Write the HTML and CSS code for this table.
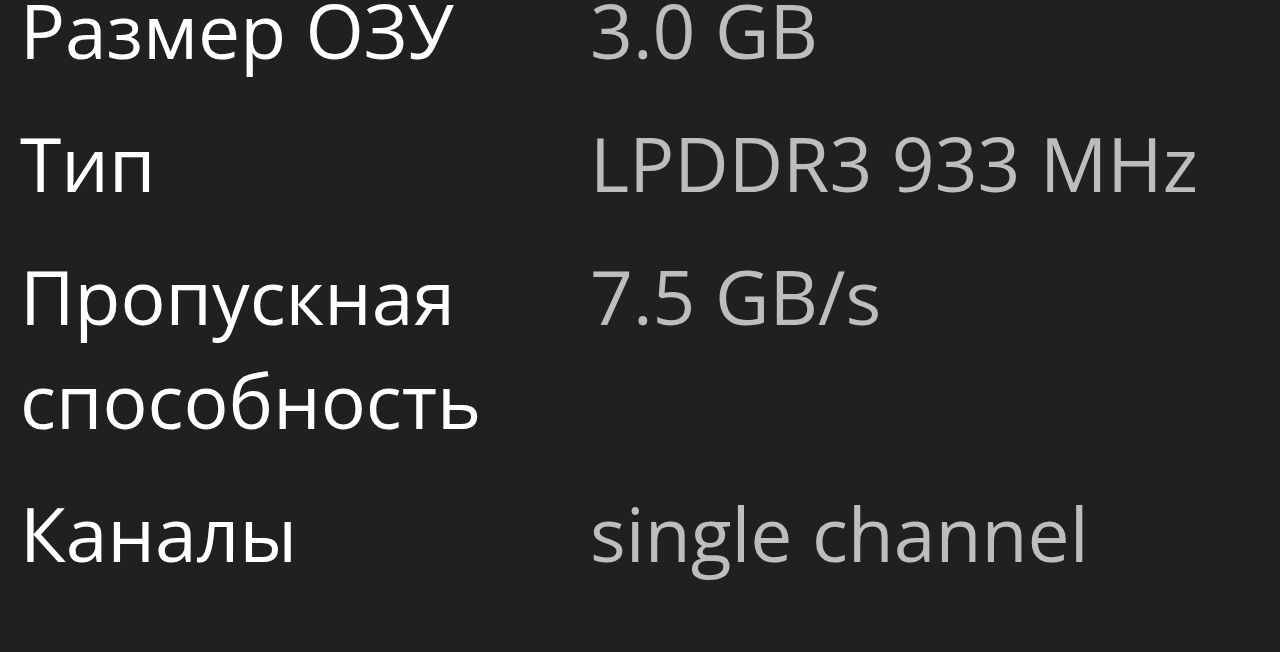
FILE: index.html
```html
<!DOCTYPE html>
<html lang="ru">
<head>
<meta charset="utf-8">
<link rel="stylesheet" href="styles.css">
</head>
<body>
<div class="specs">
  <div class="label">Размер ОЗУ</div><div class="value">3.0 GB</div>
  <div class="label">Тип</div><div class="value">LPDDR3 933 MHz</div>
  <div class="label">Пропускная способность</div><div class="value">7.5 GB/s</div>
  <div class="label">Каналы</div><div class="value">single channel</div>
</div>
</body>
</html>
```
FILE: styles.css
```css
html, body {
  margin: 0;
  padding: 0;
  background: #202020;
  height: 100%;
  overflow: hidden;
}
.specs {
  display: grid;
  grid-template-columns: 570px 1fr;
  row-gap: 29px;
  margin-top: -22px;
  padding-left: 20px;
  font-family: "Open Sans", sans-serif;
  font-size: 75px;
  line-height: 104px;
}
.label {
  color: #ffffff;
  padding-right: 20px;
}
.value {
  color: #bdbdbd;
}
```
